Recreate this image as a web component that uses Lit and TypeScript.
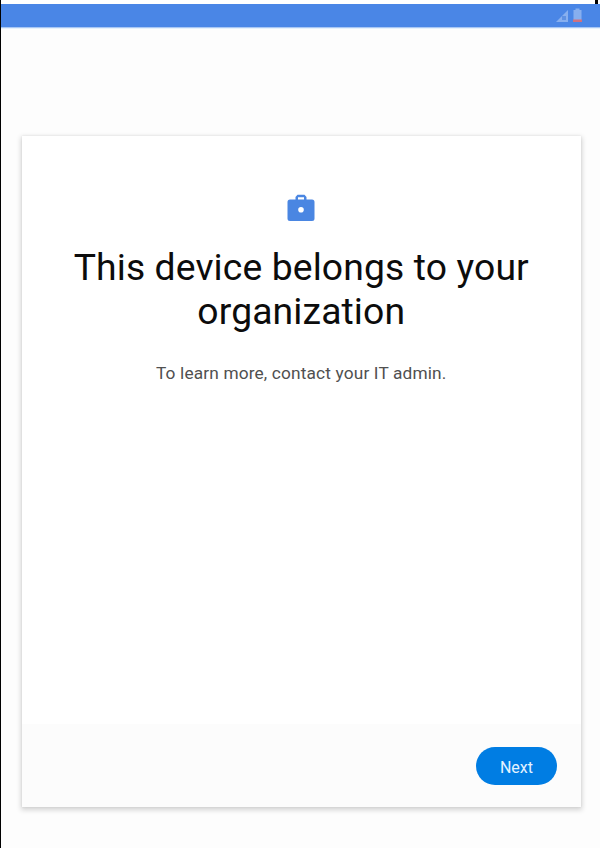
import { LitElement, html, css } from "lit";
import { customElement } from "lit/decorators.js";

@customElement("app-root")
export class AppRoot extends LitElement {
  static styles = css`
    :host {
      display: flex;
      flex-direction: column;
      box-sizing: border-box;
      width: 600px;
      height: 848px;
      overflow: hidden;
      border-left: 1px solid #000;
      background: #fdfdfd;
      font-family: Roboto, sans-serif;
    }
    .edge {
      height: 4px;
      display: flex;
      justify-content: flex-end;
      padding-right: 2px;
      background: #fff;
    }
    .edge i {
      width: 3px;
      background: #000;
    }
    .status {
      height: 24px;
      box-sizing: border-box;
      background: #4a86e6;
      border-bottom: 1px solid #a9c7f4;
      box-shadow: 0 1px 0 #e6f1fc;
      display: flex;
      justify-content: flex-end;
      padding: 4px 18px 0 0;
      gap: 4px;
    }
    .status svg {
      display: block;
    }
    .card {
      margin: 108px 19px 0 20.5px;
      height: 671px;
      background: #fff;
      box-shadow: 0 2px 5px 1px rgba(0, 0, 0, 0.17), 0 0 2px rgba(0, 0, 0, 0.07);
      display: flex;
      flex-direction: column;
    }
    .body {
      flex: 1;
      display: flex;
      flex-direction: column;
      align-items: center;
      text-align: center;
    }
    .bag {
      display: block;
      margin: 58px 1.5px 0 0;
    }
    h1 {
      margin: 24px 0 0;
      font-size: 37.3px;
      line-height: 43.6px;
      letter-spacing: 0.12px;
      font-weight: 400;
      color: #0c0c0c;
      white-space: nowrap;
    }
    p {
      margin: 29.300px 0 0;
      font-size: 17.3px;
      line-height: 22px;
      letter-spacing: 0.15px;
      color: #505050;
      white-space: nowrap;
    }
    .footer {
      height: 83px;
      box-sizing: border-box;
      background: #fcfcfc;
      display: flex;
      justify-content: flex-end;
      padding: 23px 24px 0 0;
    }
    button {
      width: 81px;
      height: 38px;
      border: 0;
      padding: 2px 0 0;
      border-radius: 19px;
      background: #007de3;
      color: #e4f3ff;
      font: 400 16px Roboto, sans-serif;
    }
  `;

  render() {
    return html`
      <div class="edge"><i></i></div>
      <div class="status">
        <svg width="13" height="16" viewBox="0 0 13 16">
          <path d="M0 14 12 2v12z" fill="#87afef" />
          <path d="M6 8h4v4H6z" fill="#5e91e3" />
        </svg>
        <svg width="9" height="16" viewBox="0 0 9 16">
          <path d="M0.500 2h2V0.500h4V2h2v12h-8z" fill="#87afef" />
          <path d="M0 11.500h9V14H0z" fill="#d0717f" />
        </svg>
      </div>
      <main class="card">
        <div class="body">
          <svg class="bag" width="28" height="28" viewBox="0 0 28 28">
            <path
              fill="#4a86e2"
              fill-rule="evenodd"
              d="M3 5.500h5.500V3l2-2.300h7l2 2.300v2.500H25q2.500 0 2.500 2.500V24.500q0 2.500-2.500 2.500H3Q.5 27 .5 24.500V8Q.5 5.500 3 5.500zM11 5.500h6V3.200h-6zM14 13a2.800 2.800 0 1 0 0 5.600a2.800 2.800 0 1 0 0-5.600z"
            />
          </svg>
          <h1>This device belongs to your<br />organization</h1>
          <p>To learn more, contact your IT admin.</p>
        </div>
        <div class="footer"><button>Next</button></div>
      </main>
    `;
  }
}
